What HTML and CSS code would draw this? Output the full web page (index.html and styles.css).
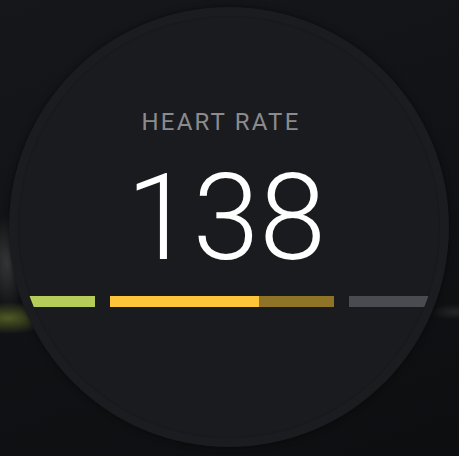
FILE: index.html
```html
<!DOCTYPE html>
<html lang="en">
<head>
<meta charset="utf-8">
<title>Heart Rate</title>
<link rel="stylesheet" href="styles.css">
</head>
<body>
  <div class="stage">
    <div class="bezel">
      <div class="face">
        <div class="label">HEART RATE</div>
        <div class="value">138</div>
        <div class="zones">
          <div class="zone zone-low"></div>
          <div class="zone zone-mid"><div class="zone-fill" style="width:66.5%"></div></div>
          <div class="zone zone-high"></div>
        </div>
      </div>
    </div>
  </div>
</body>
</html>
```
FILE: styles.css
```css
html, body {
  margin: 0;
  padding: 0;
}
body {
  width: 459px;
  height: 456px;
  overflow: hidden;
  font-family: Roboto, "Noto Sans", sans-serif;
  background-color: #111215;
  background-image:
    radial-gradient(ellipse 44px 16px at 8px 318px, rgba(140, 160, 50, 0.5), rgba(140, 160, 50, 0) 100%),
    radial-gradient(ellipse 22px 46px at 8px 262px, rgba(120, 125, 120, 0.35), rgba(120, 125, 120, 0) 100%),
    radial-gradient(ellipse 24px 8px at 455px 312px, rgba(120, 125, 120, 0.2), rgba(120, 125, 120, 0) 100%),
    linear-gradient(160deg, #16171a 0%, #111215 50%, #0d0e10 100%);
}
.stage {
  width: 459px;
  height: 456px;
  display: flex;
  align-items: flex-start;
  justify-content: flex-start;
  padding: 7px 0 0 9px;
  box-sizing: border-box;
}
.bezel {
  width: 440px;
  height: 440px;
  border-radius: 50%;
  padding: 9px;
  box-sizing: border-box;
  background: #1b1c20;
  box-shadow: 0 0 6px rgba(0, 0, 0, 0.5);
}
.face {
  width: 422px;
  height: 422px;
  border-radius: 50%;
  overflow: hidden;
  background: #1a1b1f;
  display: flex;
  flex-direction: column;
  align-items: center;
  box-shadow: inset 0 0 2px rgba(0, 0, 0, 0.25);
}
.label {
  margin-top: 94px;
  font-size: 24px;
  line-height: 24px;
  letter-spacing: 2.2px;
  color: #8b8b8d;
  font-weight: 400;
  margin-right: 16px;
}
.value {
  margin-top: 24px;
  font-size: 120px;
  line-height: 120px;
  font-weight: 300;
  color: #ffffff;
  margin-right: 6px;
}
.zones {
  margin-top: 18px;
  width: 100%;
  height: 11px;
  display: flex;
  gap: 15px;
}
.zone {
  height: 11px;
}
.zone-low {
  flex: 0 0 77px;
  background: #b5cb5a;
}
.zone-mid {
  flex: 0 0 224px;
  background: #8f7428;
}
.zone-fill {
  height: 100%;
  background: #fdc63a;
}
.zone-high {
  flex: 1 1 auto;
  background: #4a4b50;
}
```
